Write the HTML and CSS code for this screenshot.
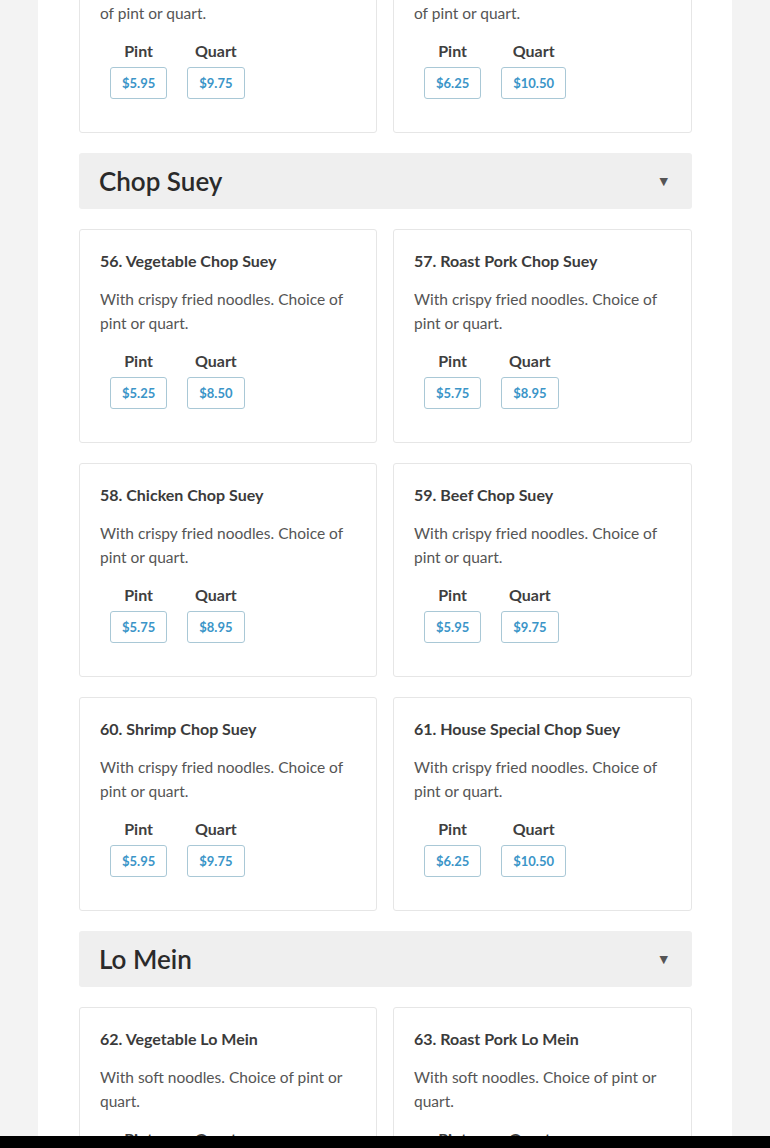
FILE: index.html
```html
<!DOCTYPE html>
<html lang="en">
<head>
<meta charset="utf-8">
<title>Menu</title>
<link rel="stylesheet" href="styles.css">
</head>
<body>
<div class="page">
  <div class="grid grid-first">
    <div class="card">
      <h3 class="item-title">54. Shrimp Chow Mein</h3>
      <p class="item-desc">With crispy fried noodles. Choice<br>of pint or quart.</p>
      <div class="options">
        <div class="option"><span class="opt-label">Pint</span><span class="price">$5.95</span></div>
        <div class="option"><span class="opt-label">Quart</span><span class="price">$9.75</span></div>
      </div>
    </div>
    <div class="card">
      <h3 class="item-title">55. House Special Chow Mein</h3>
      <p class="item-desc">With crispy fried noodles. Choice<br>of pint or quart.</p>
      <div class="options">
        <div class="option"><span class="opt-label">Pint</span><span class="price">$6.25</span></div>
        <div class="option"><span class="opt-label">Quart</span><span class="price">$10.50</span></div>
      </div>
    </div>
  </div>

  <div class="section-head"><h2>Chop Suey</h2><span class="caret">▼</span></div>
  <div class="grid">
    <div class="card">
      <h3 class="item-title">56. Vegetable Chop Suey</h3>
      <p class="item-desc">With crispy fried noodles. Choice of pint or quart.</p>
      <div class="options">
        <div class="option"><span class="opt-label">Pint</span><span class="price">$5.25</span></div>
        <div class="option"><span class="opt-label">Quart</span><span class="price">$8.50</span></div>
      </div>
    </div>
    <div class="card">
      <h3 class="item-title">57. Roast Pork Chop Suey</h3>
      <p class="item-desc">With crispy fried noodles. Choice of pint or quart.</p>
      <div class="options">
        <div class="option"><span class="opt-label">Pint</span><span class="price">$5.75</span></div>
        <div class="option"><span class="opt-label">Quart</span><span class="price">$8.95</span></div>
      </div>
    </div>
    <div class="card">
      <h3 class="item-title">58. Chicken Chop Suey</h3>
      <p class="item-desc">With crispy fried noodles. Choice of pint or quart.</p>
      <div class="options">
        <div class="option"><span class="opt-label">Pint</span><span class="price">$5.75</span></div>
        <div class="option"><span class="opt-label">Quart</span><span class="price">$8.95</span></div>
      </div>
    </div>
    <div class="card">
      <h3 class="item-title">59. Beef Chop Suey</h3>
      <p class="item-desc">With crispy fried noodles. Choice of pint or quart.</p>
      <div class="options">
        <div class="option"><span class="opt-label">Pint</span><span class="price">$5.95</span></div>
        <div class="option"><span class="opt-label">Quart</span><span class="price">$9.75</span></div>
      </div>
    </div>
    <div class="card">
      <h3 class="item-title">60. Shrimp Chop Suey</h3>
      <p class="item-desc">With crispy fried noodles. Choice of pint or quart.</p>
      <div class="options">
        <div class="option"><span class="opt-label">Pint</span><span class="price">$5.95</span></div>
        <div class="option"><span class="opt-label">Quart</span><span class="price">$9.75</span></div>
      </div>
    </div>
    <div class="card">
      <h3 class="item-title">61. House Special Chop Suey</h3>
      <p class="item-desc">With crispy fried noodles. Choice of pint or quart.</p>
      <div class="options">
        <div class="option"><span class="opt-label">Pint</span><span class="price">$6.25</span></div>
        <div class="option"><span class="opt-label">Quart</span><span class="price">$10.50</span></div>
      </div>
    </div>
  </div>

  <div class="section-head"><h2>Lo Mein</h2><span class="caret">▼</span></div>
  <div class="grid">
    <div class="card">
      <h3 class="item-title">62. Vegetable Lo Mein</h3>
      <p class="item-desc">With soft noodles. Choice of pint or quart.</p>
      <div class="options">
        <div class="option"><span class="opt-label">Pint</span><span class="price">$5.25</span></div>
        <div class="option"><span class="opt-label">Quart</span><span class="price">$8.50</span></div>
      </div>
    </div>
    <div class="card">
      <h3 class="item-title">63. Roast Pork Lo Mein</h3>
      <p class="item-desc">With soft noodles. Choice of pint or quart.</p>
      <div class="options">
        <div class="option"><span class="opt-label">Pint</span><span class="price">$5.75</span></div>
        <div class="option"><span class="opt-label">Quart</span><span class="price">$8.95</span></div>
      </div>
    </div>
  </div>
</div>
<div class="bottom-bar"></div>
</body>
</html>
```
FILE: styles.css
```css
html, body {
  margin: 0;
  padding: 0;
}
body {
  background: #f3f3f3;
  font-family: Lato, "Open Sans", "Liberation Sans", sans-serif;
  color: #555;
  overflow: hidden;
  height: 1148px;
}
.page {
  width: 694px;
  margin: 0 auto;
  background: #fff;
  padding: 0 40px 200px 41px;
  box-sizing: border-box;
  min-height: 1400px;
}
.grid {
  display: grid;
  grid-template-columns: 298px 299px;
  gap: 20px 16px;
  margin-bottom: 20px;
}
.grid-first {
  margin-top: -81px;
}
.card {
  border: 1px solid #e6e6e6;
  border-radius: 3px;
  padding: 20px 20px 33px 20px;
  height: 214px;
  box-sizing: border-box;
  background: #fff;
}
.item-title {
  margin: 0;
  font-size: 16px;
  line-height: 22px;
  font-weight: 700;
  color: #3b3b3b;
}
.item-desc {
  margin: 15px 0 0 0;
  font-size: 15.5px;
  line-height: 24px;
  color: #555;
}
.options {
  display: flex;
  margin-top: 14px;
}
.option {
  display: flex;
  flex-direction: column;
  align-items: center;
  padding: 0 10px;
}
.opt-label {
  font-size: 16px;
  line-height: 24px;
  font-weight: 700;
  color: #3f3f3f;
}
.price {
  margin-top: 4px;
  display: block;
  box-sizing: border-box;
  height: 32px;
  line-height: 30px;
  padding: 0 11px;
  border: 1px solid #a9c8d6;
  border-radius: 3px;
  font-size: 13px;
  font-weight: 700;
  color: #3b95c8;
}
.section-head {
  display: flex;
  align-items: center;
  justify-content: space-between;
  height: 56px;
  box-sizing: border-box;
  padding: 0 24px 0 20px;
  background: #efefef;
  border-radius: 3px;
  margin-bottom: 20px;
}
.section-head h2 {
  margin: 0;
  font-size: 26px;
  font-weight: 600;
  color: #2a2a2a;
}
.caret {
  font-size: 11px;
  color: #555;
  font-family: "DejaVu Sans", sans-serif;
}
.bottom-bar {
  position: fixed;
  left: 0;
  right: 0;
  bottom: 0;
  height: 12px;
  background: #000;
}
```
